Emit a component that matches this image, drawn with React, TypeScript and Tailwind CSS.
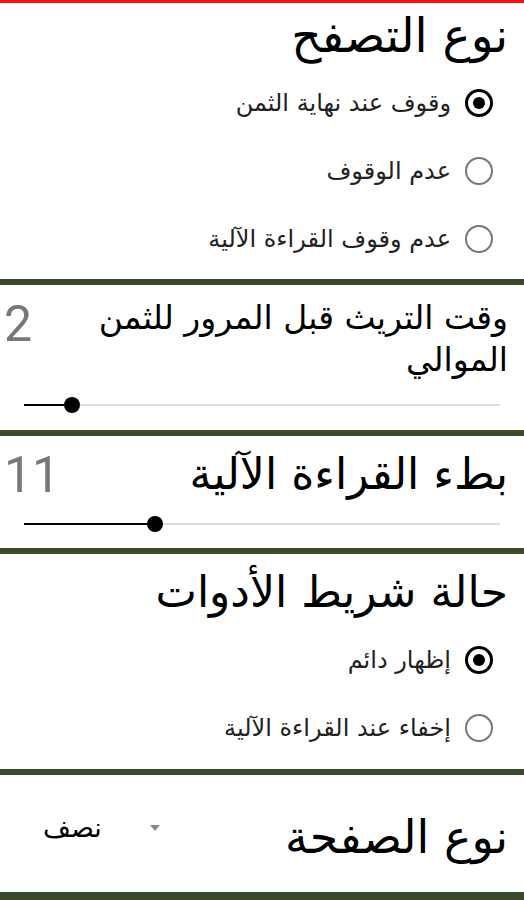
// Reader settings screen (RTL, Arabic)

const ARABIC = { fontFamily: '"DejaVu Sans", sans-serif' };

function Divider() {
  return <div className="h-[6px] w-full bg-[#3b4a2b]" />;
}

function Radio({ label, checked }: { label: string; checked?: boolean }) {
  return (
    <div className="flex items-center gap-[14px] pr-[31px] h-[68px]">
      {checked ? (
        <span className="flex h-[28px] w-[28px] items-center justify-center rounded-full border-[3px] border-black">
          <span className="h-[12px] w-[12px] rounded-full bg-black" />
        </span>
      ) : (
        <span className="h-[28px] w-[28px] rounded-full border-2 border-[#777]" />
      )}
      <span className="text-[24px] leading-[30px] text-[#222]" style={ARABIC}>
        {label}
      </span>
    </div>
  );
}

function Slider({ pct }: { pct: number }) {
  return (
    <div dir="ltr" className="px-[24px]">
      <div className="relative h-[16px]">
        <div className="absolute left-0 right-0 top-[7px] h-[2px] bg-[#ddd]" />
        <div className="absolute left-0 top-[7px] h-[2px] bg-black" style={{ width: `${pct}%` }} />
        <div
          className="absolute top-0 h-[16px] w-[16px] -translate-x-1/2 rounded-full bg-black"
          style={{ left: `${pct}%` }}
        />
      </div>
    </div>
  );
}

export default function App() {
  return (
    <div dir="rtl" className="w-[524px] h-[900px] overflow-hidden bg-white text-black">
      <div className="h-[3px] bg-[#ff1010]" />

      {/* Browse type */}
      <section className="h-[276px]">
        <h2 className="pr-[16px] text-[47px] leading-[66px]" style={ARABIC}>
          نوع التصفح
        </h2>
        <Radio label="وقوف عند نهاية الثمن" checked />
        <Radio label="عدم الوقوف" />
        <Radio label="عدم وقوف القراءة الآلية" />
      </section>
      <Divider />

      {/* Pause time */}
      <section className="h-[145px] pt-[12px]">
        <div className="flex items-start justify-between pr-[16px] pl-[4px]">
          <h2 className="text-[33px] leading-[42px]" style={ARABIC}>
            وقت التريث قبل المرور للثمن
            <br />
            الموالي
          </h2>
          <span className="pt-[2px] text-[50px] leading-[50px] text-[#777]" style={{ fontFamily: 'Roboto, sans-serif' }}>
            2
          </span>
        </div>
        <div className="mt-[16px]">
          <Slider pct={10} />
        </div>
      </section>
      <Divider />

      {/* Auto-read speed */}
      <section className="h-[112px] pt-[10px]">
        <div className="flex items-start justify-between pr-[16px] pl-[4px]">
          <h2 className="text-[44px] leading-[56px]" style={ARABIC}>
            بطء القراءة الآلية
          </h2>
          <span className="pt-[4px] text-[50px] leading-[50px] text-[#777]" style={{ fontFamily: 'Roboto, sans-serif' }}>
            11
          </span>
        </div>
        <div className="mt-[14px]">
          <Slider pct={27.5} />
        </div>
      </section>
      <Divider />

      {/* Toolbar state */}
      <section className="h-[215px] pt-[4px]">
        <h2 className="pr-[16px] text-[44px] leading-[68px]" style={ARABIC}>
          حالة شريط الأدوات
        </h2>
        <Radio label="إظهار دائم" checked />
        <Radio label="إخفاء عند القراءة الآلية" />
      </section>
      <Divider />

      {/* Page type */}
      <section className="h-[117px] pt-[30px]">
        <div className="flex items-start justify-between pr-[16px] pl-[43px]">
          <h2 className="text-[46px] leading-[64px]" style={ARABIC}>
            نوع الصفحة
          </h2>
          <div className="flex items-center gap-[48px] pt-[6px]">
            <span className="h-0 w-0 border-x-[5px] border-t-[6px] border-x-transparent border-t-[#888]" />
            <span className="text-[27px] leading-[34px]" style={ARABIC}>
              نصف
            </span>
          </div>
        </div>
      </section>
      <div className="h-[8px] w-full bg-[#3b4a2b]" />
    </div>
  );
}
